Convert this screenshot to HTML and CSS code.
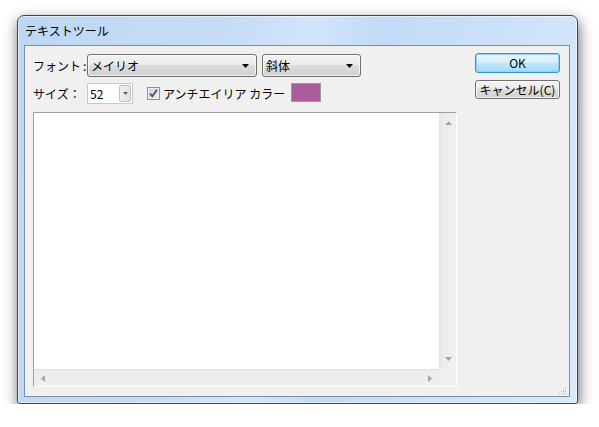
FILE: index.html
```html
<!DOCTYPE html>
<html lang="ja">
<head>
<meta charset="utf-8">
<title>テキストツール</title>
<link rel="stylesheet" href="styles.css">
</head>
<body>
<div class="window">
  <div class="titlebar"><span class="title">テキストツール</span></div>
  <div class="client">
    <div class="main">
      <div class="row row-font">
        <span class="label">フォント<span class="colon">:</span></span>
        <div class="combo combo-font">
          <span class="combo-text">メイリオ</span>
          <svg class="arrow" width="7" height="4" viewBox="0 0 7 4"><path d="M0 0H7L3.5 4Z" fill="#000"/></svg>
        </div>
        <div class="combo combo-style">
          <span class="combo-text">斜体</span>
          <svg class="arrow" width="7" height="4" viewBox="0 0 7 4"><path d="M0 0H7L3.5 4Z" fill="#000"/></svg>
        </div>
      </div>
      <div class="row row-size">
        <span class="label">サイズ：</span>
        <div class="edit">
          <span class="edit-text">52</span>
          <span class="drop"><svg width="5" height="3" viewBox="0 0 5 3"><path d="M0 0H5L2.5 3Z" fill="#4d6185"/></svg></span>
        </div>
        <span class="check"><svg width="11" height="11" viewBox="0 0 11 11"><path d="M2 5.5L4.3 8.3L9 1.8" fill="none" stroke="#3d5288" stroke-width="1.8"/></svg></span>
        <span class="check-label">アンチエイリア カラー</span>
        <span class="swatch"></span>
      </div>
      <div class="textarea">
        <div class="ta-body"></div>
        <div class="vscroll">
          <svg width="7" height="4" viewBox="0 0 7 4"><path d="M3.5 0L7 4H0Z" fill="#a6a6a6"/></svg>
          <svg width="7" height="4" viewBox="0 0 7 4"><path d="M0 0H7L3.5 4Z" fill="#a6a6a6"/></svg>
        </div>
        <div class="hscroll">
          <svg width="4" height="7" viewBox="0 0 4 7"><path d="M4 0V7L0 3.5Z" fill="#a6a6a6"/></svg>
          <svg width="4" height="7" viewBox="0 0 4 7"><path d="M0 0V7L4 3.5Z" fill="#a6a6a6"/></svg>
        </div>
        <div class="corner"></div>
      </div>
    </div>
    <div class="buttons">
      <div class="btn btn-default">OK</div>
      <div class="btn">キャンセル(C)</div>
    </div>
    <svg class="grip" width="10" height="10" viewBox="0 0 10 10">
      <g fill="#b5b5b5">
        <rect x="8" y="2" width="1" height="1"/>
        <rect x="6" y="4" width="1" height="1"/><rect x="8" y="4" width="1" height="1"/>
        <rect x="4" y="6" width="1" height="1"/><rect x="6" y="6" width="1" height="1"/><rect x="8" y="6" width="1" height="1"/>
        <rect x="2" y="8" width="1" height="1"/><rect x="4" y="8" width="1" height="1"/><rect x="6" y="8" width="1" height="1"/><rect x="8" y="8" width="1" height="1"/>
      </g>
    </svg>
  </div>
</div>
</body>
</html>
```

FILE: styles.css
```css
* { box-sizing: border-box; }
html, body { margin: 0; padding: 0; background: #ffffff; }
body {
  font-family: "Noto Sans CJK JP", "Noto Sans", sans-serif;
  font-size: 12px;
  color: #000;
  padding: 15px 0 0 17px;
}
.window {
  width: 561px;
  height: 389px;
  border: 1px solid #3d4650;
  border-radius: 7px 7px 3px 3px;
  background: linear-gradient(100deg, #bdd7f3 0%, #c7ddf6 35%, #d2e6fb 48%, #c2dbf6 58%, #cde2f9 80%, #d8eafc 100%);
  box-shadow: 1px 5px 14px rgba(0,0,0,0.6), inset 0 0 0 1px rgba(255,255,255,0.55);
  display: flex;
  flex-direction: column;
  padding: 0 7px 6px 6px;
}
.titlebar {
  height: 29px;
  display: flex;
  align-items: center;
  padding-left: 1px;
  flex: none;
}
.title { line-height: 14px; color: #000; }
.client {
  flex: 1;
  position: relative;
  background: #f0f0f0;
  border: 1px solid #7a8ea6;
  display: flex;
  padding: 7px 9px 9px 8px;
}
.main { display: flex; flex-direction: column; }
.row { display: flex; align-items: center; }
.row-font { height: 23px; margin-top: 1px; }
.row-size { height: 21px; margin-top: 6px; }
.label { width: 54px; flex: none; line-height: 14px; white-space: nowrap; }
.colon { margin-left: 2px; }
.combo {
  height: 23px;
  border: 1px solid #707070;
  border-radius: 3px;
  background: linear-gradient(#f3f3f3 0%, #ebebeb 45%, #dddddd 50%, #d0d0d0 100%);
  box-shadow: inset 0 0 0 1px rgba(255,255,255,0.7);
  display: flex;
  align-items: center;
  padding: 0 7px 0 3px;
}
.combo-text { flex: 1; line-height: 14px; }
.combo-font { width: 170px; }
.combo-style { width: 99px; margin-left: 5px; }
.edit {
  width: 46px;
  height: 21px;
  background: #fff;
  border: 1px solid #c9c9c9;
  display: flex;
  align-items: center;
  padding: 1px 1px 1px 2px;
}
.edit-text { flex: 1; line-height: 14px; }
.drop {
  width: 12px;
  height: 17px;
  border: 1px solid #c3c3c3;
  border-radius: 2px;
  background: linear-gradient(to right, #efefef, #e2e2e2);
  display: flex;
  align-items: center;
  justify-content: center;
}
.check {
  width: 13px;
  height: 13px;
  margin-left: 14px;
  border: 1px solid #8e8f8f;
  background: linear-gradient(135deg, #cfcfcf, #f0f0f0);
  display: flex;
  align-items: center;
  justify-content: center;
  box-shadow: inset 0 0 0 1px #f4f4f4;
}
.check-label { margin-left: 3px; line-height: 14px; white-space: pre; }
.swatch {
  width: 30px;
  height: 19px;
  margin-left: 6px;
  background: #ad5c9b;
  border: 1px solid #9a9a9a;
  align-self: flex-start;
}
.textarea {
  width: 424px;
  height: 275px;
  margin-top: 8px;
  border: 1px solid;
  border-color: #a0a0a0 #ffffff #ffffff #a0a0a0;
  display: grid;
  grid-template-columns: 1fr 17px;
  grid-template-rows: 1fr 17px;
  background: #fff;
}
.ta-body { background: #fff; border-right: 1px solid #fff; }
.vscroll {
  background: linear-gradient(to right, #e2e2e2, #ececec 3px, #f0f0f0);
  display: flex;
  flex-direction: column;
  justify-content: space-between;
  align-items: center;
  padding: 8px 0 8px 1px;
}
.hscroll {
  background: linear-gradient(to bottom, #e2e2e2, #ececec 3px, #f0f0f0);
  display: flex;
  justify-content: space-between;
  align-items: center;
  padding: 1px 7px 0 7px;
}
.corner { background: #f0f0f0; }
.buttons {
  margin-left: auto;
  display: flex;
  flex-direction: column;
  gap: 7px;
}
.btn {
  width: 85px;
  height: 19px;
  border: 1px solid #707070;
  border-radius: 3px;
  background: linear-gradient(#f3f3f3 0%, #ebebeb 45%, #dddddd 50%, #d0d0d0 100%);
  box-shadow: inset 0 0 0 1px rgba(255,255,255,0.75);
  display: flex;
  align-items: center;
  justify-content: center;
  line-height: 14px;
}
.btn-default {
  height: 20px;
  border-color: #2a9ad6;
  background: linear-gradient(#e9f6fd 0%, #d9f0fc 45%, #bee6fd 50%, #a7d9f5 100%);
  box-shadow: inset 0 0 0 1px #8fd3f4;
}
.grip { position: absolute; right: 2px; bottom: 1px; }
```
